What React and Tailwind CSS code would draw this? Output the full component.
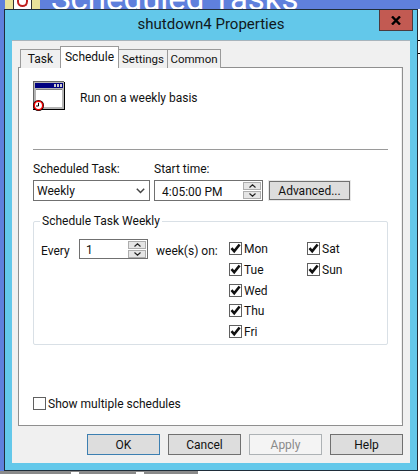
const font = { fontFamily: "Roboto, sans-serif" }

function Check({ label, checked = true }) {
  return (
    <div className="flex items-center gap-[2px] h-[13px]">
      <div className="w-[13px] h-[13px] border border-[#606060] bg-white flex items-center justify-center">
        {checked && (
          <svg width="11" height="11" viewBox="0 0 11 11">
            <path d="M1.5 5.2 L4.2 8.3 L9.6 1.5" fill="none" stroke="#111" strokeWidth="2.6" />
          </svg>
        )}
      </div>
      <span className="pt-[2px]">{label}</span>
    </div>
  )
}

function Spinner() {
  return (
    <div className="flex flex-col gap-[1px] w-[18px] shrink-0">
      <div className="h-[8px] border border-[#adadad] bg-[#e5e5e5] flex items-center justify-center">
        <svg width="7" height="4" viewBox="0 0 7 4"><path d="M0.5 3.5 L3.5 0.8 L6.5 3.5" fill="none" stroke="#222" strokeWidth="1.2" /></svg>
      </div>
      <div className="h-[8px] border border-[#adadad] bg-[#e5e5e5] flex items-center justify-center">
        <svg width="7" height="4" viewBox="0 0 7 4"><path d="M0.5 0.5 L3.5 3.2 L6.5 0.5" fill="none" stroke="#222" strokeWidth="1.2" /></svg>
      </div>
    </div>
  )
}

function Button({ children, className = "" }) {
  return (
    <div className={`w-[73px] h-[21px] border flex items-center justify-center pt-[2px] ${className}`}>
      {children}
    </div>
  )
}

function WindowIcon() {
  return (
    <svg width="32" height="31" viewBox="0 0 32 31" className="block">
      <rect x="0" y="0" width="31" height="28" fill="#b4b4b4" />
      <rect x="0" y="0" width="31" height="1" fill="#666" />
      <rect x="0" y="0" width="1" height="28" fill="#666" />
      <rect x="31" y="1" width="1" height="28" fill="#000" />
      <rect x="0" y="28" width="32" height="1" fill="#000" />
      <rect x="2" y="2" width="28" height="5" fill="#000080" />
      <rect x="21" y="3" width="2" height="3" fill="#ccc" />
      <rect x="24" y="3" width="2" height="3" fill="#ccc" />
      <rect x="27" y="3" width="2" height="3" fill="#ccc" />
      <rect x="3" y="8" width="26" height="18" fill="#fff" />
      <rect x="3" y="8" width="26" height="1" fill="#808080" />
      <circle cx="5.5" cy="24.5" r="5.5" fill="#000" />
      <circle cx="5.5" cy="24.5" r="4.2" fill="#fff" stroke="#f00000" strokeWidth="1.5" />
      <path d="M5.5 21.8 V25 H3" fill="none" stroke="#000" strokeWidth="1" />
    </svg>
  )
}

export default function App() {
  return (
    <div className="relative w-[420px] h-[476px] overflow-hidden bg-white text-[12px] text-[#111] leading-[15px]" style={font}>
      {/* desktop behind the dialog */}
      <div className="absolute left-0 top-0 w-[420px] h-[9px] bg-[#5f80dc]" />
      <div className="absolute left-0 top-0 w-[4px] h-[471px] bg-[#5f80dc]" />
      <div className="absolute left-[5px] top-0 w-[35px] h-[9px] bg-[#e9e29a] flex justify-center">
        <div className="w-[19px] h-[9px] bg-white border-x border-[#333] flex items-start justify-center">
          <div className="w-[11px] h-[7px] rounded-b-full border-2 border-t-0 border-[#c02020]" />
        </div>
      </div>
      <div className="absolute left-[51px] top-[-21px] text-[33px] leading-[40px] text-white whitespace-nowrap">
        Scheduled Tasks
      </div>
      <div className="absolute left-0 top-[471px] w-[198px] h-[3px] bg-[#8a8a8a] flex">
        <div className="ml-[71px] w-[8px] h-[2px] mt-px bg-white" />
        <div className="ml-[57px] w-[8px] h-[2px] mt-px bg-white" />
      </div>
      <div className="absolute left-[418px] top-[40px] w-[2px] h-[14px] border-y border-black" />

      {/* dialog */}
      <div className="absolute left-[4px] top-[9px] w-[414px] h-[462px] border border-[#1f2d3a] bg-[#63c8ea] flex flex-col">
        <div className="h-[30px] flex items-center justify-center relative text-[15px] text-[#101820] pb-[2px]">
          <span>shutdown4 Properties</span>
          <div className="absolute right-[4px] top-0 w-[34px] h-[21px] bg-[#c25a52] border border-t-0 border-[#4b3a3e] flex items-center justify-center">
            <svg width="10" height="9" viewBox="0 0 10 9"><path d="M1 0.5 L9 8.5 M9 0.5 L1 8.5" stroke="#000" strokeWidth="2.4" /></svg>
          </div>
        </div>

        <div className="mx-[7px] h-[423px] bg-[#f0f0f0] border-t border-[#a8b4bc] flex flex-col px-[6px] pt-[6px]">
          <div className="flex items-end h-[21px] relative z-10 -mb-px pl-[2px]">
            <div className="w-[40px] h-[19px] border border-r-0 border-b-0 border-[#9a9a9a] bg-[#f0f0f0] flex items-center justify-center pt-px">Task</div>
            <div className="w-[59px] h-[22px] border border-b-0 border-[#9a9a9a] bg-white flex items-center justify-center">Schedule</div>
            <div className="w-[49px] h-[19px] border-t border-r border-[#9a9a9a] bg-[#f0f0f0] flex items-center justify-center pt-px text-[11.5px]">Settings</div>
            <div className="w-[53px] h-[19px] border-t border-r border-[#9a9a9a] bg-[#f0f0f0] flex items-center justify-center pt-px text-[11.5px]">Common</div>
          </div>

          <div className="h-[359px] w-[385px] border border-[#8f8f8f] bg-white pr-[3px] pb-[2px] flex">
            <div className="flex-1 border-r border-[#efefef] pl-[14px] pr-[13px] flex flex-col">
              <div className="flex items-center gap-[15px] h-[31px] mt-[13px]">
                <WindowIcon />
                <span className="pt-[3px]">Run on a weekly basis</span>
              </div>
              <div className="mt-[37px] h-px bg-[#9a9a9a]" />

              <div className="flex mt-[12px] gap-[4px]">
                <div className="w-[117px]">
                  <div>Scheduled Task:</div>
                  <div className="mt-[3px] h-[21px] border border-[#707070] flex items-center justify-between pl-[3px] pr-[4px]">
                    <span className="pt-[2px]">Weekly</span>
                    <svg width="9" height="6" viewBox="0 0 9 6"><path d="M0.8 0.8 L4.5 4.5 L8.2 0.8" fill="none" stroke="#444" strokeWidth="1.5" /></svg>
                  </div>
                </div>
                <div className="w-[109px]">
                  <div>Start time:</div>
                  <div className="mt-[3px] h-[21px] border border-[#707070] flex items-center justify-between pl-[7px] pr-px">
                    <span className="pt-[3px]">4:05:00 PM</span>
                    <Spinner />
                  </div>
                </div>
                <div className="self-end mb-px ml-[2px] w-[81px] h-[19px] border border-[#707070] outline outline-[#e8e8e8] bg-[#dddddd] flex items-center justify-center pt-px">Advanced...</div>
              </div>

              <div className="relative mt-[20px] w-[355px] h-[124px] border border-[#d9e0e6] rounded-[2px] pt-[17px] pl-[7px] flex">
                <span className="absolute left-[6px] top-[-8px] bg-white px-[2px]">Schedule Task Weekly</span>
                <div className="w-[38px] mt-[5px]">Every</div>
                <div className="w-[69px] h-[20px] border border-[#707070] flex items-center justify-between pl-[6px] pr-px">
                  <span className="pt-[3px]">1</span>
                  <Spinner />
                </div>
                <div className="ml-[8px] mt-[5px] w-[73px]">week(s) on:</div>
                <div className="flex flex-col gap-[7.75px] w-[78px] mt-[3px]">
                  <Check label="Mon" />
                  <Check label="Tue" />
                  <Check label="Wed" />
                  <Check label="Thu" />
                  <Check label="Fri" />
                </div>
                <div className="flex flex-col gap-[7.75px] mt-[3px]">
                  <Check label="Sat" />
                  <Check label="Sun" />
                </div>
              </div>

              <div className="mt-[52px]">
                <Check label="Show multiple schedules" checked={false} />
              </div>
            </div>
          </div>

          <div className="flex justify-end gap-[8px] mt-[8px] pr-px">
            <Button className="bg-[#dddddd] border-[#3c7fb1]">OK</Button>
            <Button className="bg-[#dddddd] border-[#707070]">Cancel</Button>
            <Button className="bg-[#f4f4f4] border-[#adb2b5] text-[#8a8a8a]">Apply</Button>
            <Button className="bg-[#dddddd] border-[#707070]">Help</Button>
          </div>
        </div>
      </div>
    </div>
  )
}
